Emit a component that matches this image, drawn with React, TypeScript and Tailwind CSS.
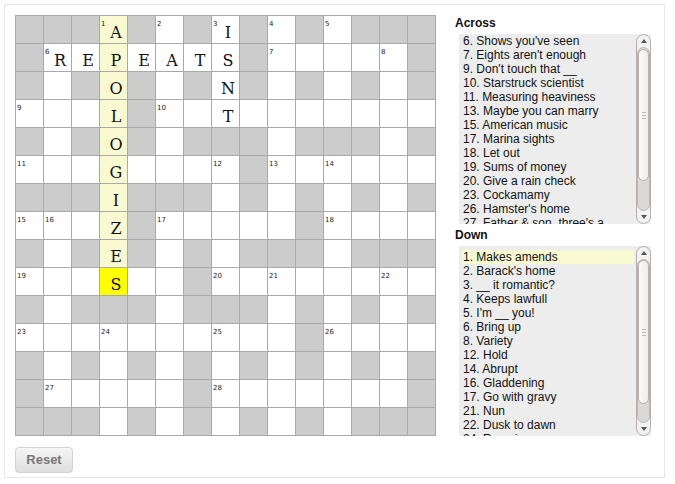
import React from "react";

const layout = [
  "###.#.#.#.#.###",
  "#.......#.....#",
  "#.#.#.#.#.#.#.#",
  "....#..........",
  "#.#.#.###.###.#",
  "........#......",
  "###.###.#.#.#.#",
  "....#.....#....",
  "#.#.#.#.###.###",
  "......#........",
  "#.###.###.#.#.#",
  "..........#....",
  "#.#.#.#.#.#.#.#",
  "#.....#.......#",
  "###.#.#.#.#.###",
];

const numbers: Record<string, number> = {
  "0,3": 1, "0,5": 2, "0,7": 3, "0,9": 4, "0,11": 5,
  "1,1": 6, "1,9": 7, "1,13": 8,
  "3,0": 9, "3,5": 10,
  "5,0": 11, "5,7": 12, "5,9": 13, "5,11": 14,
  "7,0": 15, "7,1": 16, "7,5": 17, "7,11": 18,
  "9,0": 19, "9,7": 20, "9,9": 21, "9,13": 22,
  "11,0": 23, "11,3": 24, "11,7": 25, "11,11": 26,
  "13,1": 27, "13,7": 28,
};

const letters: Record<string, string> = {
  "0,3": "A", "1,3": "P", "2,3": "O", "3,3": "L", "4,3": "O",
  "5,3": "G", "6,3": "I", "7,3": "Z", "8,3": "E", "9,3": "S",
  "1,1": "R", "1,2": "E", "1,4": "E", "1,5": "A", "1,6": "T", "1,7": "S",
  "0,7": "I", "2,7": "N", "3,7": "T",
};

const across = [
  "6. Shows you've seen",
  "7. Eights aren't enough",
  "9. Don't touch that __",
  "10. Starstruck scientist",
  "11. Measuring heaviness",
  "13. Maybe you can marry",
  "15. American music",
  "17. Marina sights",
  "18. Let out",
  "19. Sums of money",
  "20. Give a rain check",
  "23. Cockamamy",
  "26. Hamster's home",
  "27. Father & son, three's a",
];

const down = [
  "1. Makes amends",
  "2. Barack's home",
  "3. __ it romantic?",
  "4. Keeps lawfull",
  "5. I'm __ you!",
  "6. Bring up",
  "8. Variety",
  "12. Hold",
  "14. Abrupt",
  "16. Gladdening",
  "17. Go with gravy",
  "21. Nun",
  "22. Dusk to dawn",
  "24. Roomie",
];

function Cell({ r, c }: { r: number; c: number }) {
  const key = `${r},${c}`;
  const block = layout[r][c] === "#";
  const current = r === 9 && c === 3;
  const word = c === 3 && r <= 8;
  const bg = block ? "bg-[#cccccc]" : current ? "bg-[#ffff00]" : word ? "bg-[#fafad2]" : "bg-white";
  return (
    <div className={`relative h-[27px] w-[27px] ${bg}`}>
      {numbers[key] && (
        <span className="absolute left-[1px] top-[3px] text-[7px] leading-[10px] text-[#222] font-['DejaVu_Sans',sans-serif]">
          {numbers[key]}
        </span>
      )}
      {letters[key] && (
        <div className="pt-[7px] pl-[5px] text-center text-[16px] leading-[20px] text-[#111] font-['DejaVu_Serif',serif]">
          {letters[key]}
        </div>
      )}
    </div>
  );
}

function Arrow({ up }: { up?: boolean }) {
  return (
    <div className="flex h-[12px] items-center justify-center">
      <svg width="6" height="4" viewBox="0 0 6 4">
        <path d={up ? "M0 4 L3 0 L6 4 Z" : "M0 0 L3 4 L6 0 Z"} fill="#555" />
      </svg>
    </div>
  );
}

function Scrollbar({ thumbTop, thumbHeight }: { thumbTop: number; thumbHeight: number }) {
  return (
    <div className="flex h-full w-[15px] flex-col rounded-[8px] border border-[#b6aea7] bg-[#f2f2f2]">
      <Arrow up />
      <div className="flex-1 rounded-[7px] border border-[#bdb6b0] bg-[#d9d9d9]">
        <div
          className="flex flex-col items-center justify-center gap-[2px] rounded-[7px] border border-[#b6aea7] bg-gradient-to-r from-[#fbfbfb] to-[#ececec]"
          style={{ marginTop: thumbTop, height: thumbHeight }}
        >
          <div className="h-px w-[4px] bg-[#bbb]" />
          <div className="h-px w-[4px] bg-[#bbb]" />
          <div className="h-px w-[4px] bg-[#bbb]" />
        </div>
      </div>
      <Arrow />
    </div>
  );
}

function ClueList({ items, active, padTop, thumbTop, thumbHeight }: { items: string[]; active?: number; padTop: string; thumbTop: number; thumbHeight: number }) {
  return (
    <div className="ml-[4px] flex h-[190px] w-[192px] bg-[#ededed]">
      <div className={`h-full w-[175px] overflow-hidden pl-[3px] ${padTop}`}>
        {items.map((t, i) => (
          <div
            key={i}
            className={`whitespace-nowrap pl-[1px] text-[12px] leading-[14px] text-[#111] ${i === active ? "bg-[#fafad2]" : ""}`}
          >
            {t}
          </div>
        ))}
      </div>
      <div className="ml-[2px]">
        <Scrollbar thumbTop={thumbTop} thumbHeight={thumbHeight} />
      </div>
    </div>
  );
}

export default function App() {
  return (
    <div className="p-[4px] font-['Liberation_Sans',Arial,sans-serif]">
      <div className="flex h-[474px] w-[661px] border border-[#e8e8e8] pl-[10px] pt-[10px]">
        {/* Grid */}
        <div>
          <div className="grid grid-cols-[repeat(15,27px)] gap-px border border-[#a9a9a9] bg-[#a9a9a9]">
            {layout.map((row, r) => row.split("").map((_, c) => <Cell key={`${r}-${c}`} r={r} c={c} />))}
          </div>
          <button className="mt-[11px] h-[26px] w-[58px] rounded-[4px] border border-[#d2d2d2] bg-gradient-to-b from-[#f6f6f6] to-[#dedede] text-[13px] font-bold text-[#777]">
            Reset
          </button>
        </div>

        {/* Clues */}
        <div className="ml-[19px] pt-[1px]">
          <div className="text-[12px] font-bold leading-[14px] text-[#111]">Across</div>
          <div className="mt-[4px]">
            <ClueList items={across} padTop="pt-0" thumbTop={1} thumbHeight={132} />
          </div>
          <div className="mt-[4px] text-[12px] font-bold leading-[14px] text-[#111]">Down</div>
          <div className="mt-[4px]">
            <ClueList items={down} active={0} padTop="pt-[4px]" thumbTop={0} thumbHeight={144} />
          </div>
        </div>
      </div>
    </div>
  );
}
